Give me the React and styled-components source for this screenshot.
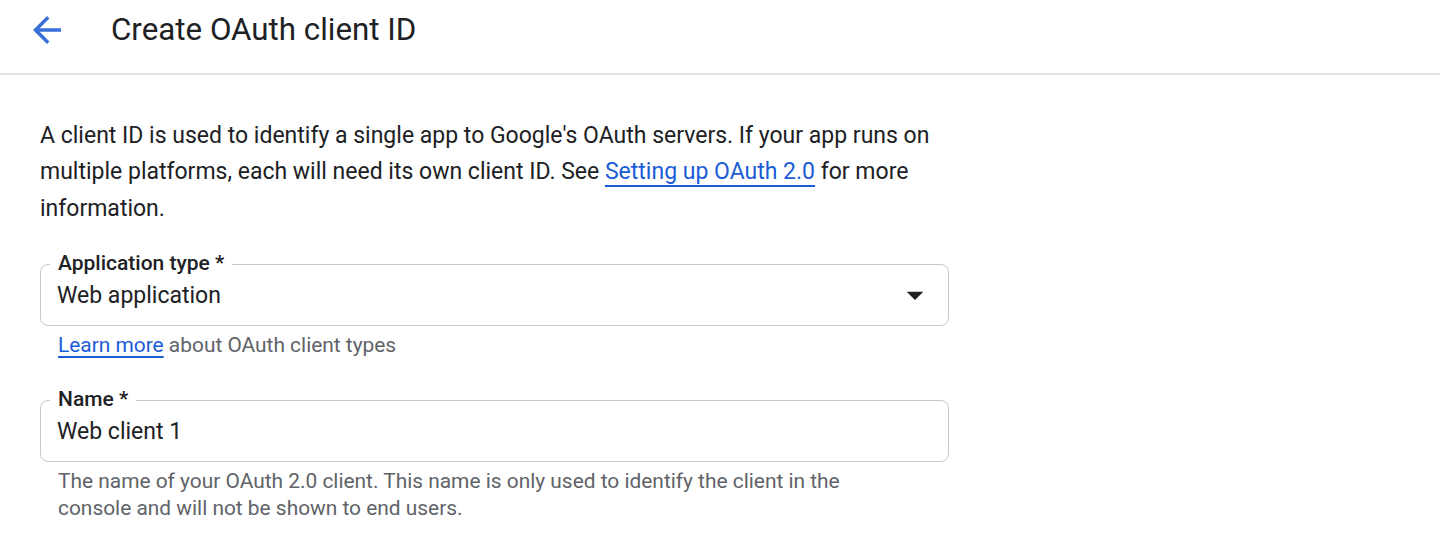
import styled, { createGlobalStyle } from 'styled-components'

const GlobalStyle = createGlobalStyle`
  body {
    margin: 0;
    background: #fff;
    font-family: Roboto, "Liberation Sans", Arial, sans-serif;
    color: #202124;
  }
`

function BackArrow() {
  return (
    <svg width="42" height="42" viewBox="0 0 24 24" fill="#3a6fd9">
      <path d="M20 11H7.83l5.59-5.59L12 4l-8 8 8 8 1.41-1.41L7.83 13H20v-2z" />
    </svg>
  )
}

function DropArrow() {
  return (
    <svg width="40" height="40" viewBox="0 0 24 24" fill="#202124">
      <path d="M7 10l5 5 5-5z" />
    </svg>
  )
}

function App() {
  return (
    <Page>
      <GlobalStyle />
      <Header>
        <BackButton aria-label="Back">
          <BackArrow />
        </BackButton>
        <Title>Create OAuth client ID</Title>
      </Header>
      <Content>
        <Intro>
          A client ID is used to identify a single app to Google's OAuth servers. If your app runs on
          multiple platforms, each will need its own client ID. See{' '}
          <Link href="#">Setting up OAuth 2.0</Link> for more information.
        </Intro>

        <Field>
          <FieldLabel>Application type *</FieldLabel>
          <FieldValue>Web application</FieldValue>
          <DropIcon>
            <DropArrow />
          </DropIcon>
        </Field>
        <Hint>
          <HintLink href="#">Learn more</HintLink> about OAuth client types
        </Hint>

        <Field $gap>
          <FieldLabel>Name *</FieldLabel>
          <FieldValue>Web client 1</FieldValue>
        </Field>
        <Hint $narrow>
          The name of your OAuth 2.0 client. This name is only used to identify the client in the
          console and will not be shown to end users.
        </Hint>
      </Content>
    </Page>
  )
}

export default App

const Page = styled.div`
  width: 1440px;
  height: 553px;
  overflow: hidden;
  background: #fff;
`

const Header = styled.div`
  display: flex;
  align-items: center;
  height: 75px;
  box-sizing: border-box;
  border-bottom: 2px solid #e3e3e3;
  padding-left: 26px;
`

const BackButton = styled.div`
  display: flex;
  width: 42px;
  height: 42px;
  margin-top: -13px;
`

const Title = styled.h1`
  margin: -14px 0 0 43px;
  font-size: 31.3px;
  font-weight: 400;
  color: #202124;
`

const Content = styled.div`
  padding: 42.5px 0 0 40px;
  width: 909px;
`

const Intro = styled.p`
  margin: 0 0 37px;
  width: 960px;
  font-size: 23px;
  line-height: 36.5px;
  color: #202124;
`

const Link = styled.a`
  color: #1a5dd6;
  text-decoration: underline;
  text-underline-offset: 6px;
  text-decoration-thickness: 2px;
`

const Field = styled.div`
  position: relative;
  display: flex;
  align-items: center;
  height: 62px;
  box-sizing: border-box;
  border: 1.5px solid #c8c8c8;
  border-radius: 8px;
  padding: 0 16px;
  margin-top: ${p => (p.$gap ? '41px' : '0')};
`

const FieldLabel = styled.span`
  position: absolute;
  top: -14px;
  left: 9px;
  padding: 0 8px;
  background: #fff;
  font-size: 21px;
  line-height: 24px;
  font-weight: 500;
  color: #202124;
`

const FieldValue = styled.span`
  flex: 1;
  font-size: 23px;
  color: #202124;
`

const DropIcon = styled.span`
  display: flex;
  margin-right: -3px;
`

const Hint = styled.div`
  margin-top: 6px;
  padding-left: 18px;
  width: ${p => (p.$narrow ? '860px' : 'auto')};
  font-size: 20.9px;
  line-height: 27px;
  color: #5f6368;
`

const HintLink = styled.a`
  color: #1a5dd6;
  text-decoration: underline;
  text-underline-offset: 4px;
  text-decoration-thickness: 2px;
`
